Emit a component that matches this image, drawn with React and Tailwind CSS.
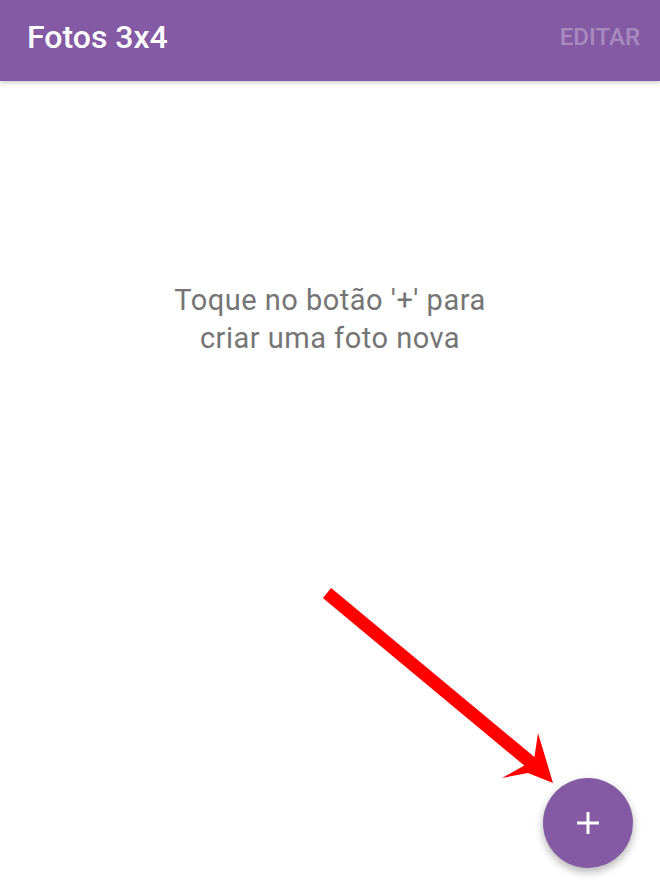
import React from 'react'

// Header bar shown at the top of the app
const TopBar = () => (
  <header className="relative z-10 flex h-[81px] shrink-0 items-center justify-between bg-[#835aa3] pb-2 pl-[27px] pr-[20px] shadow-[0_2px_4px_rgba(0,0,0,0.2)]">
    <h1 className="text-[32px] font-medium text-white">Fotos 3x4</h1>
    <button className="text-[24px] font-medium text-[#a88abf]">EDITAR</button>
  </header>
)

// Red annotation arrow pointing at the FAB
const Arrow = () => (
  <svg
    className="pointer-events-none absolute left-0 top-0"
    width="660"
    height="880"
    viewBox="0 0 660 880"
  >
    <line x1="327" y1="593" x2="535" y2="766" stroke="#ff0000" strokeWidth="13" />
    <path d="M553 783 L538 733 L534 760 L502 778 L528 773 Z" fill="#ff0000" />
  </svg>
)

export default function App() {
  return (
    <div
      className="relative flex h-[880px] w-[660px] flex-col overflow-hidden bg-white"
      style={{ fontFamily: 'Roboto, "Noto Sans", sans-serif' }}
    >
      <TopBar />
      <main className="flex flex-1 flex-col items-center pt-[200px]">
        <p className="text-center text-[29px] leading-[38px] tracking-[0.5px] text-[#757575]">
          Toque no botão '+' para
          <br />
          criar uma foto nova
        </p>
      </main>
      <Arrow />
      <button className="absolute left-[543px] top-[778px] flex h-[90px] w-[90px] items-center justify-center rounded-full bg-[#835aa3] shadow-[0_4px_8px_rgba(0,0,0,0.3)]">
        <svg width="24" height="24" viewBox="0 0 24 24">
          <path d="M12 1v22M1 12h22" stroke="white" strokeWidth="3" />
        </svg>
      </button>
    </div>
  )
}
